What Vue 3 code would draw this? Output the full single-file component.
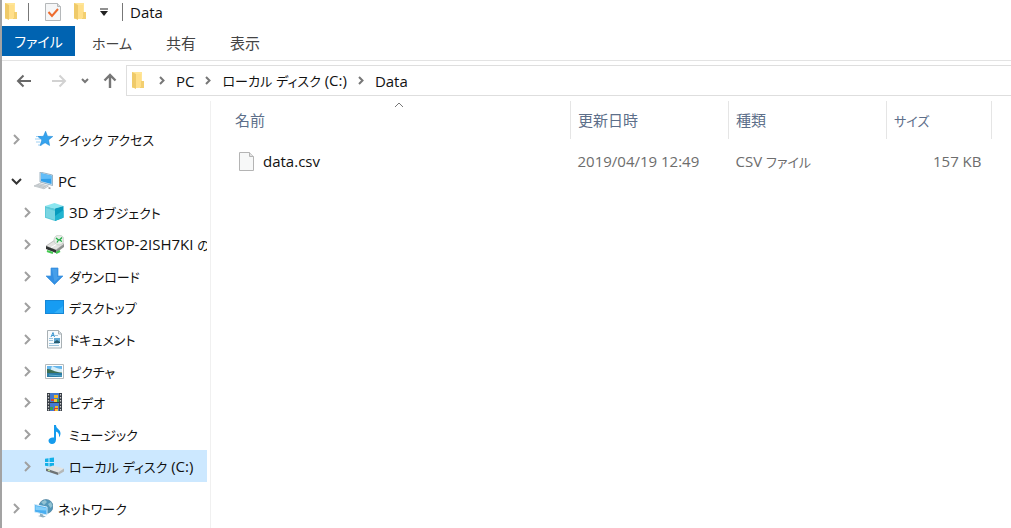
<script setup>
import { h } from 'vue'

const places = [
  { name: '3D オブジェクト', icon: 'cube' },
  { name: 'DESKTOP-2ISH7KI の', icon: 'device' },
  { name: 'ダウンロード', icon: 'download' },
  { name: 'デスクトップ', icon: 'desktop' },
  { name: 'ドキュメント', icon: 'document' },
  { name: 'ピクチャ', icon: 'picture' },
  { name: 'ビデオ', icon: 'video' },
  { name: 'ミュージック', icon: 'music' },
  { name: 'ローカル ディスク (C:)', icon: 'disk', selected: true },
]
const groups = [
  { name: 'クイック アクセス', icon: 'star', children: [] },
  { name: 'PC', icon: 'pc', open: true, children: places },
  { name: 'ネットワーク', icon: 'network', children: [] },
]
const crumbs = ['PC', 'ローカル ディスク (C:)', 'Data']
const tabs = ['ホーム', '共有', '表示']

// Kana runs are set smaller than Latin and kanji.
const Label = (props) =>
  h('span', { class: 'label' }, props.text.split(/([ぁ-んァ-ヶー]+)/).map((part, i) =>
    i % 2 ? h('span', { class: 'kana' }, part) : part))
Label.props = ['text']

const shapes = {
  star: `<path d="M2 6.500h5M1 9h5M2 12h4M4 15h4" stroke="#9ed0f3"/><path d="M11.600 1.200l1.900 5 5.300.3-4.200 3.400 1 5.600-4.500-2.700-5 2.800 1.700-5.500L4 6.600l5.400-.3z" fill="#35a3ee" stroke="#1782d3" stroke-width=".5"/>`,
  pc: `<path d="M6 0l12.500 3v10.500L6 10z" fill="#d0e5f3" stroke="#7d9aad" stroke-width=".7"/><path d="M7 1.300l10.500 2.500v8.300L7 9.300z" fill="#319fe9"/><path d="M7 1.300l10.500 2.500v3L7 7z" fill="#63bdf8"/><path d="M5.500 11.500l9 2.500-4.500 2.800L0 14z" fill="#dfe2e4" stroke="#a3abb0" stroke-width=".6"/><path d="M4 12.700l8 2.200M2.500 13.500l8 2.300" stroke="#a7b0b4" stroke-width=".6"/><path d="M14.500 15.800l2 .7" stroke="#999" stroke-width="1.500"/>`,
  cube: `<path d="M0 3l9.500-3 9 3-8.500 2.500z" fill="#8be6f0"/><path d="M0 3l10 2.500V18L0 14.800z" fill="#5cc9d8"/><path d="M10 5.500L18.500 3v11.800L10 18z" fill="#079bbd"/><path d="M1 5l9 3v9l-9-3z" fill="#79d5e2"/><path d="M10 13l8.500-6v7.500L10 18z" fill="#20b4d0"/>`,
  device: `<path d="M1 11l9-6 9 4-8 6z" fill="#e3e3e1" stroke="#aaa" stroke-width=".7"/><path d="M1 11l10 4v3L1 14z" fill="#303333"/><path d="M11 15l8-6v3l-8 6z" fill="#8d918e"/><path d="M6 12.500l7-4" stroke="#fff"/><path d="M2 16l6 2M11 18l4-2" stroke="#43c950" stroke-width="2"/><circle cx="14" cy="5" r="5" fill="#e6efe6" stroke="#bbb" stroke-width=".6"/><path d="M11 3l2.500 2-1.500 2.500M17 2.500L14.500 5l2.500 1.500" fill="none" stroke="#1aaa42" stroke-width="1.200"/>`,
  download: `<path d="M6 1h7v8h5l-8.500 8.500L1 9h5z" fill="#338fe3" stroke="#3d93de" stroke-width=".7"/><path d="M7 2h5v8h3l-5.500 5z" fill="#479fe9"/>`,
  desktop: `<rect x=".5" y="2.500" width="18" height="13" fill="#169cf3" stroke="#1687d6"/><path d="M18 3v5L9 15h9z" fill="#32aff8"/>`,
  document: `<path d="M2.500.5h11l3 3V18h-14z" fill="#f8fbfd" stroke="#a8b0b4"/><path d="M13.500.5V4h3" fill="#dce5e9" stroke="#a8b0b4"/><path d="M6 7l2-4.500 1.500 4.500M7 5.500h2" fill="none" stroke="#3995cf"/><path d="M10 5.500h3M4 8.500h4M4 10.500h4M4 13.500h10M4 15.500h10" stroke="#9cc4dc"/><path d="M9 8h6v5H9z" fill="#5fa8d4"/><path d="M9 12l3-2 3 2v1H9z" fill="#285d70"/>`,
  picture: `<path d="M.5 2.500h18v14H.5z" fill="#fff" stroke="#b4babd"/><path d="M2 4h15v5H2z" fill="#66b6ec"/><path d="M7 4c3 1 6 3 10 3v3H5z" fill="#d6eef9"/><path d="M2 7c4-.5 6 3 15 3.500v1H2z" fill="#3c6f53"/><path d="M2 11h15v4H2z" fill="#2d7ca5"/><path d="M4 13l13 1" stroke="#65b5d1"/>`,
  video: `<path d="M2 0h15v18H2z" fill="#373d45"/><path d="M5 0h9v9H5zM5 10h9v8H5z" fill="#4579cf"/><path d="M3.500 1v17M15.500 1v17" stroke="#ccc" stroke-width="1.200" stroke-dasharray="1.500 1.500"/><path d="M9 2h4v3H9zM10 13h3v2h-3z" fill="#efb72b"/><path d="M6 6h3v2H6zM9 15h4v3H9z" fill="#d23e36"/><path d="M11 6h3v3h-3zM5 14h3v3H5z" fill="#37a152"/><path d="M9 6h3v3H9zM10 16h3v2h-3z" fill="#f3c739"/>`,
  music: `<path d="M9 0h2c0 4 4.500 4 4.500 8.500 0 2-1 3-1.500 4 .5-4-1-5-3-6v8c0 3-2 4.500-4 4.500s-3.500-1.500-3.500-3.500S6 12 9 12.500z" fill="#159bed"/>`,
  disk: `<path d="M0 1.700l3.500-.5V5H0zM4.500 1L9 .4V5H4.500zM0 6h3.500v3.300L0 8.800zM4.500 6H9v4l-4.500-.5z" fill="#14b0e8"/><path d="M1 11.500l7-3 11 3-6 4z" fill="#e2e3e3"/><path d="M1 11.500l12 4V18L1 14z" fill="#6e7274"/><path d="M13 15.500l6-4v3L13 18z" fill="#b5b8b8"/><path d="M3 13.200l2 .7" stroke="#c7ee9d"/>`,
  network: `<circle cx="12" cy="7.500" r="7" fill="#5297ba" stroke="#5585a0" stroke-width=".7"/><path d="M7 3l4-2 2 2-3 3zM14 5l3-2 1.500 4-2 2z" fill="#93c3d3"/><path d="M.5 5.500l12.500 2.500v8L.5 13z" fill="#49aef1" stroke="#d0eafa"/><path d="M1.500 7l11 2v2.500l-11-.5z" fill="#83cef9"/><path d="M6 14.500v2l-2 .5 5 1.500 3-1-3-1v-1" fill="#8fafc0"/>`,
  folder: `<path d="M1 0h10v16H1z" fill="#ffe597"/><path d="M9 9h4v7H9z" fill="#f3cf70"/><path d="M1 0l4 2v15l-4-2z" fill="#efca69"/><path d="M5 2h5v13l-5 1z" fill="#ffdf8a"/>`,
  check: `<path d="M.5.500h12l3 3v14H.5z" fill="#f5f6f7" stroke="#b5b8ba"/><path d="M12.500.5v3h3" fill="#ddd" stroke="#b5b8ba"/><path d="M3.500 9l3.500 4 6-7" fill="none" stroke="#ed6b2d" stroke-width="2"/>`,
  file: `<path d="M.5.500h10l4 4v14H.5z" fill="#f7f8f8" stroke="#b4b4b4"/><path d="M10.500.5v4h4" fill="#e2e2e2" stroke="#b4b4b4"/>`,
}
</script>

<template>
  <div class="window">
    <header class="titlebar">
      <svg class="folder" viewBox="0 0 14 18" v-html="shapes.folder" />
      <i class="divider"></i>
      <button class="quick" aria-label="プロパティ"><svg class="sheet" viewBox="0 0 16 18" v-html="shapes.check" /></button>
      <button class="quick" aria-label="新しいフォルダー"><svg class="folder" viewBox="0 0 14 18" v-html="shapes.folder" /></button>
      <button class="quick more" aria-label="カスタマイズ"><svg viewBox="0 0 10 8"><path d="M1 1h8" stroke="#222" /><path d="M1 3h8L5 8z" fill="#222" /></svg></button>
      <i class="divider"></i>
      <h1>Data</h1>
    </header>

    <nav class="ribbon">
      <button class="file-tab"><Label text="ファイル" /></button>
      <div class="tabs">
        <button v-for="t in tabs" :key="t" class="tab"><Label :text="t" /></button>
      </div>
    </nav>

    <div class="address-row">
      <button class="nav-btn" aria-label="戻る"><svg width="16" height="14" viewBox="0 0 16 14"><path d="M15 7H2M7.500 1.500L2 7l5.500 5.500" fill="none" stroke="#686868" stroke-width="2" /></svg></button>
      <button class="nav-btn forward" aria-label="進む"><svg width="16" height="14" viewBox="0 0 16 14"><path d="M1 7h13M8.500 1.500L14 7l-5.500 5.500" fill="none" stroke="#d2d2d2" stroke-width="2" /></svg></button>
      <button class="nav-btn recent" aria-label="最近表示した場所"><svg width="8" height="6" viewBox="0 0 8 6"><path d="M1 1l3 3 3-3" fill="none" stroke="#777" stroke-width="2" /></svg></button>
      <button class="nav-btn up" aria-label="上へ"><svg width="14" height="16" viewBox="0 0 14 16"><path d="M7 15V2M1.500 7.500L7 2l5.500 5.500" fill="none" stroke="#777" stroke-width="2.400" /></svg></button>
      <div class="address">
        <svg class="folder" viewBox="0 0 14 18" v-html="shapes.folder" />
        <template v-for="c in crumbs" :key="c">
          <svg class="sep" viewBox="0 0 6 9"><path d="M1 1l3.500 3.500L1 8" /></svg>
          <a href="#"><Label :text="c" /></a>
        </template>
      </div>
    </div>

    <div class="body">
      <aside class="tree">
        <section v-for="g in groups" :key="g.name">
          <a href="#" class="node root">
            <svg v-if="g.open" class="arrow open" viewBox="0 0 11 11"><path d="M1 3l4.500 4.500L10 3" /></svg>
            <svg v-else class="arrow" viewBox="0 0 11 11"><path d="M3 1l4.500 4.500L3 10" /></svg>
            <svg class="icon" viewBox="0 0 19 19" v-html="shapes[g.icon]" />
            <Label :text="g.name" />
          </a>
          <div v-if="g.children.length" class="children">
            <a v-for="p in g.children" :key="p.name" href="#" class="node" :class="{ selected: p.selected }">
              <svg class="arrow" viewBox="0 0 11 11"><path d="M3 1l4.500 4.500L3 10" /></svg>
              <svg class="icon" viewBox="0 0 19 19" v-html="shapes[p.icon]" />
              <Label :text="p.name" />
            </a>
          </div>
        </section>
      </aside>

      <main>
        <table>
          <colgroup><col /><col class="date" /><col class="kind" /><col class="size" /></colgroup>
          <thead>
            <tr>
              <th>名前<svg class="sort" viewBox="0 0 10 6"><path d="M1 5l4-4 4 4" fill="none" stroke="#777" /></svg></th>
              <th>更新日時</th>
              <th>種類</th>
              <th><Label text="サイズ" /></th>
            </tr>
          </thead>
          <tbody>
            <tr>
              <td><a href="#" class="entry"><svg class="paper" viewBox="0 0 15 19" v-html="shapes.file" />data.csv</a></td>
              <td>2019/04/19 12:49</td>
              <td><Label text="CSV ファイル" /></td>
              <td class="num">157 KB</td>
            </tr>
          </tbody>
        </table>
      </main>
    </div>
  </div>
</template>

<style>
body { margin: 0; background: #fff; }
</style>

<style scoped>
.window {
  display: flex;
  flex-direction: column;
  box-sizing: border-box;
  min-height: 100vh;
  overflow: hidden;
  border-left: 2px solid #a3a3a3;
  font: 15px/20px "Open Sans", "Noto Sans CJK JP", sans-serif;
  font-feature-settings: "palt";
  color: #111;
}
.window :deep(.kana) { font-size: 13px; }
.ribbon :deep(.kana), table :deep(.kana) { font-size: 14px; }
.label { white-space: pre; }
button { padding: 0; border: 0; background: none; font: inherit; font-feature-settings: inherit; color: inherit; }
a { color: inherit; text-decoration: none; }
svg { display: block; flex: none; }
.folder { width: 14px; height: 18px; }

.titlebar { display: flex; align-items: center; height: 24px; padding: 0 0 2px 2px; }
.divider { width: 1px; height: 18px; margin-left: 10px; background: #777; }
.quick { margin-left: 16px; }
.sheet { width: 16px; height: 18px; }
.quick + .quick { margin-left: 12px; }
.titlebar .more + .divider { margin-left: 13px; }
.more svg { width: 10px; height: 8px; }
h1 { margin: 0 0 0 7px; font: inherit; }

.ribbon { display: flex; height: 34px; border-bottom: 1px solid #e3e3e3; color: #444; }
.file-tab { width: 73px; height: 30px; background: #0063b1; color: #fff; }
.tabs { display: flex; gap: 34px; padding-left: 17px; }
.tab { height: 34px; }

.address-row { display: flex; align-items: center; height: 31px; padding: 4px 0 5px 14px; }
.forward { margin-left: 19px; }
.recent { margin-left: 14px; }
.up { margin-left: 14px; }
.address {
  display: flex;
  flex: 1;
  align-items: center;
  box-sizing: border-box;
  height: 31px;
  margin-left: 9px;
  padding-left: 4px;
  border: 1px solid #dedede;
  border-right: 0;
}
.sep { width: 6px; height: 9px; margin: 0 11px; fill: none; stroke: #777; stroke-width: 2; }
.folder + .sep { margin-left: 14px; }

.body { display: flex; flex: 1; }
.tree { box-sizing: border-box; width: 209px; padding: 22px 3px 0 0; border-right: 1px solid #f0f0f0; }
section + section { margin-top: 10px; }
.node { display: flex; align-items: center; height: 32px; overflow: hidden; padding-left: 20px; }
.root { padding-left: 9px; }
.children { display: grid; grid-auto-rows: 1fr; height: 285px; }
.children .node { height: auto; }
.selected { background: #cce8ff; }
.arrow { width: 11px; height: 11px; fill: none; stroke: #a0a0a0; stroke-width: 2; }
.arrow.open { stroke: #333; }
.icon { width: 19px; height: 19px; margin: 0 5px 0 12px; }

main { flex: 1; padding: 0 19px 0 0; }
table { width: 100%; table-layout: fixed; border-collapse: collapse; }
.date, .kind { width: 158px; }
.size { width: 105px; }
th { position: relative; height: 38px; padding: 0 0 0 7px; border-right: 1px solid #e5e5e5; font-weight: 400; text-align: left; color: #5d6f8a; }
td { height: 44px; padding: 0 0 0 7px; color: #6d6d6d; }
th:first-child { padding-left: 24px; }
td:first-child { padding-left: 28px; }
td.num { padding-right: 10px; text-align: right; }
.sort { position: absolute; top: 1px; left: 183px; width: 10px; height: 6px; }
.entry { display: flex; align-items: center; gap: 9px; color: #111; }
.paper { width: 15px; height: 19px; }
</style>
